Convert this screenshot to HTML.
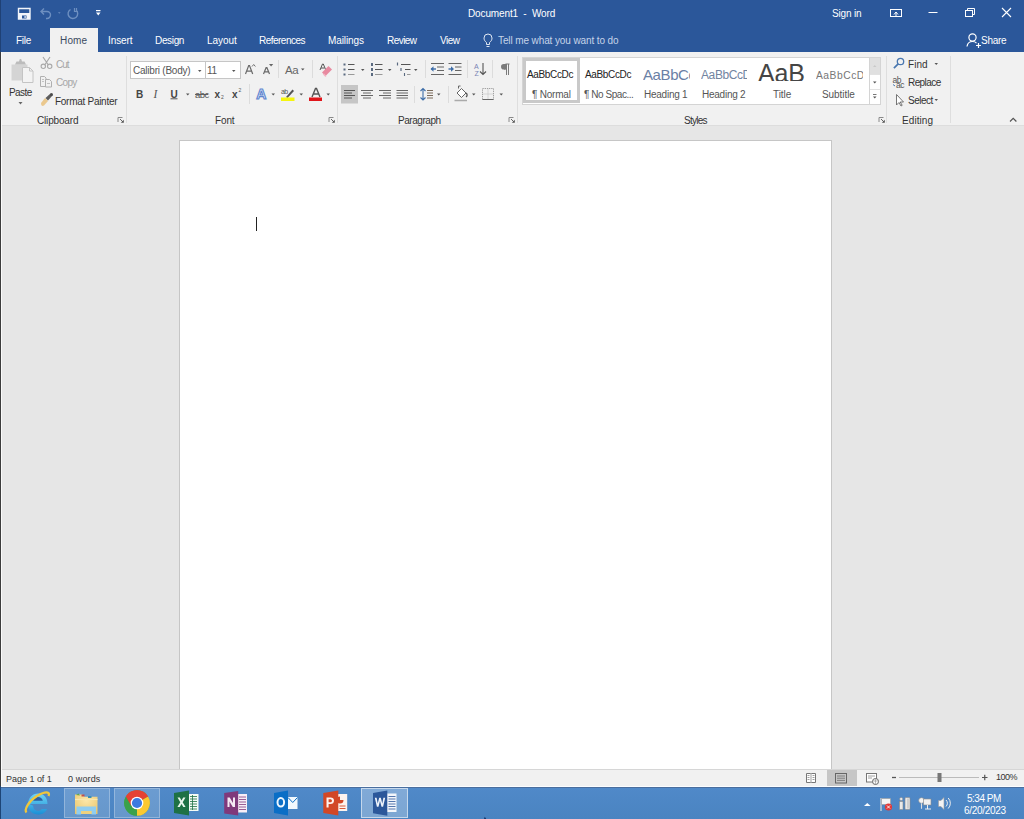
<!DOCTYPE html>
<html><head><meta charset="utf-8">
<style>
*{margin:0;padding:0;box-sizing:border-box}
html,body{width:1024px;height:819px;overflow:hidden;background:#e6e6e6;font-family:"Liberation Sans",sans-serif;}
.a{position:absolute;line-height:1;white-space:nowrap}
svg{position:absolute;overflow:visible}
#title{left:0;top:0;width:1024px;height:52px;background:#2b579a}
.tt{color:#fff;font-size:9.5px}
.tab{color:#fff;font-size:9.5px;top:36px}
#ribbon{left:0;top:52px;width:1024px;height:74px;background:#f1f1f1;border-bottom:1px solid #dddddd}
#page{left:179px;top:140px;width:653px;height:640px;background:#fff;border:1px solid #c6c6c6}
#status{left:0;top:769px;width:1024px;height:18px;background:#f1f1f1;border-top:1px solid #d6d6d6}
#taskbar{left:0;top:786px;width:1024px;height:33px;background:linear-gradient(#5089c9,#4a84c1);border-top:1px solid #fbfdff}
.st{font-size:9px;color:#444}
.rl{font-size:9.3px;color:#444}
.gl{font-size:9.3px;color:#444}
.sep{position:absolute;width:1px;background:#dedede}
.dis{color:#a6a6a6}
.arr{position:absolute;width:0;height:0;border-left:2px solid transparent;border-right:2px solid transparent;border-top:2px solid #555}
</style></head><body>
<!-- canvas & page -->
<div id="page" class="a"></div>
<div class="a" style="left:256px;top:217px;width:1px;height:14px;background:#222"></div>

<!-- title bar -->
<div id="title" class="a"></div>
<div class="a" style="left:468px;top:9px;font-size:10px;letter-spacing:-0.12px;color:#fff">Document1 &nbsp;- &nbsp;Word</div>
<div class="a" style="left:832px;top:9px;font-size:10px;letter-spacing:-0.17px;color:#fff">Sign in</div>
<div class="a" style="left:50px;top:28px;width:48px;height:24px;background:#f1f1f1"></div>
<div class="a" style="left:16px;top:36px;font-size:10px;letter-spacing:-0.27px;color:#fff">File</div>
<div class="a" style="left:60px;top:36px;font-size:10px;letter-spacing:0.17px;color:#3b4a5f">Home</div>
<div class="a" style="left:108px;top:36px;font-size:10px;letter-spacing:-0.08px;color:#fff">Insert</div>
<div class="a" style="left:155px;top:36px;font-size:10px;letter-spacing:-0.34px;color:#fff">Design</div>
<div class="a" style="left:207px;top:36px;font-size:10px;letter-spacing:-0.04px;color:#fff">Layout</div>
<div class="a" style="left:259px;top:36px;font-size:10px;letter-spacing:-0.52px;color:#fff">References</div>
<div class="a" style="left:328px;top:36px;font-size:10px;letter-spacing:-0.1px;color:#fff">Mailings</div>
<div class="a" style="left:387px;top:36px;font-size:10px;letter-spacing:-0.54px;color:#fff">Review</div>
<div class="a" style="left:440px;top:36px;font-size:10px;letter-spacing:-0.53px;color:#fff">View</div>
<div class="a" style="left:498px;top:36px;font-size:10px;letter-spacing:-0.11px;color:#c5d3e8">Tell me what you want to do</div>
<div class="a" style="left:981px;top:36px;font-size:10px;letter-spacing:-0.25px;color:#fff">Share</div>


<!-- QAT -->
<svg style="left:0px;top:0px" width="120" height="28">
 <path d="M18.5 8.5h11.5v10.5h-11.5z" fill="none" stroke="#f2f5fa" stroke-width="1.4"/>
 <rect x="18.5" y="13" width="11.5" height="6" fill="#f2f5fa"/>
 <rect x="22" y="15.5" width="4.5" height="3" fill="#2b579a"/>
 <rect x="24.5" y="16" width="1.2" height="2" fill="#f2f5fa"/>
 <path d="M44 8.5l-3 3 3 3M41.5 11.5h5.5a3.5 3.5 0 0 1 0 7h-1" fill="none" stroke="#6d8fc0" stroke-width="1.4"/>
 <path d="M58 12.3h2.6l-1.3 1.5z" fill="#6d8fc0"/>
 <path d="M70.5 9.5a4.8 4.8 0 1 0 5.5 .5" fill="none" stroke="#6d8fc0" stroke-width="1.4"/>
 <path d="M74.5 8v3.5h3.5M76.5 8v2" fill="none" stroke="#6d8fc0" stroke-width="1.2"/>
 <rect x="96" y="10" width="4.5" height="1.2" fill="#fff"/>
 <path d="M96 12.5h4.5l-2.25 3z" fill="#fff"/>
</svg>
<!-- window controls -->
<svg style="left:880px;top:0px" width="144" height="28">
 <rect x="10.5" y="9.5" width="11" height="7" fill="none" stroke="#fff" stroke-width="1"/>
 <path d="M14 14.5l2-2.5 2 2.5M16 12v4" fill="none" stroke="#fff" stroke-width="1"/>
 <rect x="48.5" y="12" width="9" height="1" fill="#fff"/>
 <rect x="85.5" y="10.5" width="7" height="6" fill="none" stroke="#fff" stroke-width="1"/>
 <path d="M87.5 10.5v-2h7v6h-2" fill="none" stroke="#fff" stroke-width="1"/>
 <path d="M122 8l9 9M131 8l-9 9" stroke="#fff" stroke-width="1.1"/>
</svg>
<!-- share -->
<svg style="left:960px;top:28px" width="24" height="24">
 <circle cx="12.5" cy="9.5" r="3.6" fill="none" stroke="#fff" stroke-width="1.2"/>
 <path d="M7 18.5c0.5-3.5 3-5 5.5-5s3.5 1 4 1.6" fill="none" stroke="#fff" stroke-width="1.2"/>
 <path d="M16 17.5h5M18.5 15v5" stroke="#fff" stroke-width="1.2"/>
</svg>
<!-- bulb -->
<svg style="left:480px;top:28px" width="16" height="24">
 <path d="M6.5 16.5v-2c-2-1.5-2.5-3-2.5-4.5a4 4 0 0 1 8 0c0 1.5-.5 3-2.5 4.5v2z" fill="none" stroke="#dfe7f3" stroke-width="1"/>
 <path d="M6.5 18.5h3" stroke="#dfe7f3" stroke-width="1"/>
</svg>

<!-- ribbon -->
<div id="ribbon" class="a"></div>
<div class="sep" style="left:126px;top:56px;height:67px"></div>
<div class="sep" style="left:337px;top:56px;height:67px"></div>
<div class="sep" style="left:517px;top:56px;height:67px"></div>
<div class="sep" style="left:886px;top:56px;height:67px"></div>
<div class="sep" style="left:950px;top:56px;height:67px"></div>


<!-- clipboard icons -->
<svg style="left:0px;top:52px" width="126" height="74">
 <path d="M11.5 12.5h16v16h-16z" fill="#d4d4d4"/>
 <path d="M15 12.5l1.5-3h2.5l0.8-2.5h1.4l0.8 2.5h2.5l1.5 3z" fill="#bcbcbc"/>
 <path d="M22.5 15.5h7l3.5 3.5v11.5h-10.5z" fill="#f3f3f3" stroke="#c4c4c4" stroke-width="1"/>
 <path d="M29.5 15.5v3.5h3.5" fill="none" stroke="#c4c4c4" stroke-width="1"/>
 <path d="M18.5 50h4l-2 2.5z" fill="#666"/>
 <path d="M43 5l6 9M50 5l-6 9" stroke="#a9a9a9" stroke-width="1.2"/>
 <circle cx="43.3" cy="14.3" r="2.2" fill="#f1f1f1" stroke="#a9a9a9" stroke-width="1.1"/>
 <circle cx="49.7" cy="14.3" r="2.2" fill="#f1f1f1" stroke="#a9a9a9" stroke-width="1.1"/>
 <path d="M40.5 24.5h4l1.5 1.5v8.5h-5.5z" fill="#f1f1f1" stroke="#b0b0b0" stroke-width="1"/>
 <path d="M45.5 27.5h4l2 2v5.5h-6z" fill="#f1f1f1" stroke="#b0b0b0" stroke-width="1"/>
 <path d="M42 27.5h2M42 29.5h2M47 31.5h3" stroke="#b8b8b8" stroke-width="0.8"/>
 <path d="M41 51l4-5 3 3-4 4.5c-1.5 1-3 .5-3-2.5z" fill="#eac88e"/>
 <path d="M45.5 46l5-4.5 2 2-4.5 5z" fill="#5c5c5c"/>
 <circle cx="51.5" cy="42.5" r="1.5" fill="#4a4a4a"/>
 
</svg>

<div class="a" style="left:9px;top:88px;font-size:10px;letter-spacing:-0.58px;color:#333">Paste</div>
<div class="a" style="left:56px;top:60px;font-size:10px;letter-spacing:-1.0px;color:#a6a6a6">Cut</div>
<div class="a" style="left:56px;top:78px;font-size:10px;letter-spacing:-0.67px;color:#a6a6a6">Copy</div>
<div class="a" style="left:55px;top:97px;font-size:10px;letter-spacing:-0.28px;color:#333">Format Painter</div>

<!-- font group -->
<div class="a" style="left:130px;top:61px;width:76px;height:18px;background:#fff;border:1px solid #c6c6c6"></div>
<div class="a" style="left:205px;top:61px;width:36px;height:18px;background:#fff;border:1px solid #c6c6c6"></div>
<div class="a" style="left:133px;top:66px;font-size:10px;letter-spacing:-0.23px;color:#555">Calibri (Body)</div>
<div class="a" style="left:207px;top:66px;font-size:10px;letter-spacing:-0.3px;color:#555">11</div>
<svg style="left:126px;top:52px" width="212" height="74">
 <path d="M72 18h3.5l-1.75 2z" fill="#555"/>
 <path d="M106 18h3.5l-1.75 2z" fill="#555"/>
 <!-- grow A -->
 <path d="M119.5 22l3.2-8.5h.8l3.2 8.5M121 19.2h4.2" fill="none" stroke="#6a6a6a" stroke-width="1.2"/>
 <path d="M126 14.5l1.7-2 1.7 2" fill="none" stroke="#666" stroke-width="0.9"/>
 <!-- shrink A -->
 <path d="M137.5 22l2.6-6.3h.8l2.6 6.3M138.8 19.8h3.8" fill="none" stroke="#6a6a6a" stroke-width="1.2"/>
 <path d="M143 12h4.2l-2.1 2.5z" fill="#666"/>
 <path d="M152.5 8v18" stroke="#dcdcdc"/>
 <!-- Aa -->
 <text x="159" y="21.5" font-family="Liberation Sans" font-size="11.5" fill="#666" letter-spacing="-0.4">Aa</text>
 <path d="M175 16.5h3.5l-1.75 2z" fill="#555"/>
 <path d="M186.5 8v18" stroke="#dcdcdc"/>
 <!-- clear formatting -->
 <path d="M194 18l2.5-6h.8l2.5 6M195 16h3.5" fill="none" stroke="#555" stroke-width="1"/>
 <path d="M196 20.5l6.5-6.5 3.5 3.5-6.5 6.5z" fill="#e88aa0"/>
 <path d="M197.5 22l2.5 2.5" stroke="#f2b6c4" stroke-width="1.5"/>
 
 <!-- row2 -->
 <text x="10" y="45.6" font-family="Liberation Sans" font-weight="bold" font-size="10" fill="#444">B</text>
 <text x="27.5" y="45.6" font-family="Liberation Serif" font-style="italic" font-size="11.5" fill="#555">I</text>
 <text x="44.5" y="45.6" font-family="Liberation Sans" font-weight="bold" font-size="10" fill="#444">U</text>
 <path d="M44.5 46.8h7" stroke="#444" stroke-width="0.9"/>
 <path d="M60 41.6h3.5l-1.75 2z" fill="#555"/>
 <text x="69" y="45.6" font-family="Liberation Sans" font-size="9.5" fill="#555" letter-spacing="-0.5">abc</text>
 <path d="M69 42.5h13" stroke="#555" stroke-width="0.9"/>
 <text x="88.5" y="45.6" font-family="Liberation Sans" font-weight="bold" font-size="10" fill="#444">x</text>
 <text x="95" y="47" font-family="Liberation Sans" font-size="5" fill="#555">2</text>
 <text x="106" y="45.6" font-family="Liberation Sans" font-weight="bold" font-size="10" fill="#444">x</text>
 <text x="112.5" y="40" font-family="Liberation Sans" font-size="5" fill="#555">2</text>
 <path d="M123.5 32v20" stroke="#dcdcdc"/>
 <!-- text effects -->
 <text x="130.2" y="47" font-family="Liberation Sans" font-weight="bold" font-size="14" fill="#e9effa" stroke="#5f86cf" stroke-width="1.1">A</text>
 <path d="M145.5 41.6h3.5l-1.75 2z" fill="#555"/>
 <!-- highlight -->
 <text x="155" y="42" font-family="Liberation Sans" font-size="7" fill="#555" letter-spacing="-0.6">ab</text>
 <path d="M160 45l6.5-7.5 1.5 1.5-6.5 7z" fill="#555"/>
 <rect x="155" y="45.5" width="13.5" height="3.5" fill="#f5f50f"/>
 <path d="M173.5 41.6h3.5l-1.75 2z" fill="#555"/>
 <!-- font color -->
 <path d="M186 45l3.5-8.5h1l3.5 8.5M187.5 42h5" fill="none" stroke="#555" stroke-width="1.4"/>
 <rect x="183" y="45.5" width="13" height="3.5" fill="#e0151b"/>
 <path d="M200.5 41.6h3.5l-1.75 2z" fill="#555"/>
</svg>


<!-- paragraph group -->
<svg style="left:337px;top:52px" width="180" height="74">
 <!-- bullets -->
 <g fill="#5a6a80"><rect x="6.5" y="11.5" width="2" height="2"/><rect x="6.5" y="16.5" width="2" height="2"/><rect x="6.5" y="21.5" width="2" height="2"/></g>
 <path d="M11 12.5h6.5M11 17.5h6.5" stroke="#555" stroke-width="1"/>
 <path d="M11 22.5h6.5" stroke="#999" stroke-width="1"/>
 <path d="M24 17h3.5l-1.75 2z" fill="#555"/>
 <!-- numbering -->
 <g fill="#5a6a80"><rect x="34" y="11" width="2" height="3"/><rect x="34" y="16" width="2" height="3"/><rect x="34" y="21" width="2" height="3"/></g>
 <path d="M38 12.5h7.5M38 17.5h7.5" stroke="#555" stroke-width="1"/>
 <path d="M38 22.5h7.5" stroke="#999" stroke-width="1"/>
 <path d="M51 17h3.5l-1.75 2z" fill="#555"/>
 <!-- multilevel -->
 <path d="M60.5 10.5v3" stroke="#5a6a80" stroke-width="1.2"/>
 <path d="M64 12.5h9.5" stroke="#555" stroke-width="1"/>
 <path d="M64 16v3" stroke="#5a6a80" stroke-width="1.2"/>
 <path d="M68 17.5h5.5" stroke="#555" stroke-width="1"/>
 <path d="M67.5 21v3" stroke="#5a6a80" stroke-width="1.1"/>
 <path d="M70 22.5h3.5" stroke="#999" stroke-width="1"/>
 <path d="M77 17h3.5l-1.75 2z" fill="#555"/>
 <path d="M88.5 8v18" stroke="#dcdcdc"/>
 <!-- decrease indent -->
 <path d="M94 11.5h13M100 15h7M100 18.5h7M94 22.5h13" stroke="#666" stroke-width="1"/>
 <path d="M94 17h5" stroke="#3f6ea8" stroke-width="1.4"/><path d="M93.5 17l3-2.8v5.6z" fill="#3f6ea8"/>
 <!-- increase indent -->
 <path d="M111.5 11.5h13M118 15h6.5M118 18.5h6.5M111.5 22.5h13" stroke="#666" stroke-width="1"/>
 <path d="M111.5 17h4.5" stroke="#3f6ea8" stroke-width="1.4"/><path d="M117 17l-3-2.8v5.6z" fill="#3f6ea8"/>
 <path d="M130.5 8v18" stroke="#dcdcdc"/>
 <!-- sort -->
 <text x="137" y="17" font-family="Liberation Sans" font-size="7" fill="#7a85b5">A</text>
 <text x="137.5" y="23.5" font-family="Liberation Sans" font-size="7" fill="#7a85b5">Z</text>
 <path d="M146 11v11.5M143 19.5l3 3 3-3" fill="none" stroke="#555" stroke-width="1.1"/>
 <path d="M155.5 8v18" stroke="#dcdcdc"/>
 <!-- pilcrow -->
 <path d="M168.5 12h4M169.5 12v11M171.5 12v11" stroke="#7a7a7a" stroke-width="1"/>
 <circle cx="166.8" cy="14.8" r="2.8" fill="#7a7a7a"/>
 <path d="M167 12h3v5.6h-3z" fill="#7a7a7a"/>
 <!-- row 2 -->
 <rect x="4" y="33" width="17" height="18.5" fill="#c6c6c6"/>
 <path d="M7 38.5h11M7 41h8M7 43.5h11M7 46h8" stroke="#555" stroke-width="1"/>
 <path d="M24 38.5h12M26 41h8M24 43.5h12M26 46h8" stroke="#666" stroke-width="1"/>
 <path d="M42 38.5h12M46 41h8M42 43.5h12M46 46h8" stroke="#666" stroke-width="1"/>
 <path d="M59.5 38.5h11.5M59.5 41h11.5M59.5 43.5h11.5M59.5 46h11.5" stroke="#666" stroke-width="1"/>
 <path d="M77.5 34v17" stroke="#dcdcdc"/>
 <!-- line spacing -->
 <path d="M86 36.5v11.5M83.5 39l2.5-2.5 2.5 2.5M83.5 45.5l2.5 2.5 2.5-2.5" fill="none" stroke="#3f6ea8" stroke-width="1.1"/>
 <path d="M90 38.5h6M90 41h6M90 43.5h6M90 46h6" stroke="#7a6a5a" stroke-width="1"/>
 <path d="M100 41.6h3.5l-1.75 2z" fill="#555"/>
 <path d="M111.5 34v17" stroke="#dcdcdc"/>
 <!-- shading -->
 <path d="M120 41l4.5-4.5 4.5 4.5-4.5 4.5z" fill="#fff" stroke="#666" stroke-width="1"/>
 <path d="M121.5 36.5v-2.5h2" fill="none" stroke="#666" stroke-width="1"/>
 <path d="M129 41c1.5 1 1.5 3 0 4" fill="none" stroke="#555" stroke-width="1.3"/>
 <path d="M117.5 48.5h12.5" stroke="#aaa" stroke-width="1.5"/>
 <path d="M135 41.6h3.5l-1.75 2z" fill="#555"/>
 <!-- borders -->
 <rect x="145.5" y="36.5" width="11" height="11" fill="none" stroke="#999" stroke-width="1" stroke-dasharray="1.2 1"/>
 <path d="M151 36.5v11M145.5 42h11" stroke="#bbb" stroke-width="1" stroke-dasharray="1 1"/>
 <path d="M145.5 47.5h11" stroke="#666" stroke-width="1"/>
 <path d="M162.5 41.6h3.5l-1.75 2z" fill="#555"/>
 
</svg>


<!-- styles gallery -->
<div class="a" style="left:522px;top:57px;width:359px;height:48px;background:#fff;border:1px solid #d4d4d4"></div>
<div class="a" style="left:523px;top:58px;width:57px;height:45px;border:3px solid #c9c9c9"></div>
<div class="a" style="left:527px;top:70px;font-size:10px;color:#222;letter-spacing:-0.35px">AaBbCcDc</div>
<div class="a" style="left:532px;top:90px;font-size:10px;letter-spacing:-0.21px;color:#555">&para; Normal</div>
<div class="a" style="left:585px;top:70px;font-size:10px;color:#222;letter-spacing:-0.35px">AaBbCcDc</div>
<div class="a" style="left:584px;top:90px;font-size:10px;letter-spacing:-0.45px;color:#555">&para; No Spac...</div>
<div class="a" style="left:643px;top:67px;font-size:15px;color:#6a7fa5;letter-spacing:-0.4px;width:47px;overflow:hidden">AaBbCc</div>
<div class="a" style="left:644px;top:90px;font-size:10px;letter-spacing:-0.25px;color:#555">Heading 1</div>
<div class="a" style="left:701px;top:68.5px;font-size:12px;color:#72849f;letter-spacing:-0.4px;width:46px;overflow:hidden">AaBbCcD</div>
<div class="a" style="left:702px;top:90px;font-size:10px;letter-spacing:-0.25px;color:#555">Heading 2</div>
<div class="a" style="left:757px;top:58px;width:48px;height:23px;overflow:hidden"><div class="a" style="left:1px;top:3px;font-size:25px;color:#454545;letter-spacing:-0.2px;line-height:1">AaB</div></div>
<div class="a" style="left:773px;top:90px;font-size:10px;letter-spacing:-0.07px;color:#555">Title</div>
<div class="a" style="left:816px;top:71px;font-size:10.3px;color:#777;letter-spacing:0.5px;width:47px;overflow:hidden">AaBbCcD</div>
<div class="a" style="left:822px;top:90px;font-size:10px;letter-spacing:-0.07px;color:#555">Subtitle</div>
<div class="a" style="left:869px;top:57px;width:12px;height:48px;background:#fff;border:1px solid #d4d4d4"></div>
<div class="a" style="left:870px;top:58px;width:10px;height:16px;background:#e0e0e0"></div>
<div class="a" style="left:870px;top:74px;width:10px;height:1px;background:#e2e2e2"></div>
<div class="a" style="left:870px;top:89px;width:10px;height:1px;background:#e2e2e2"></div>
<svg style="left:869px;top:57px" width="12" height="48">
 <path d="M4 10h3.5l-1.75-2z" fill="#c9c9c9"/>
 <path d="M4 24.5h3.5l-1.75 2z" fill="#555"/>
 <path d="M4 37.5h3.5" stroke="#555" stroke-width="0.8"/>
 <path d="M4 39.5h3.5l-1.75 2z" fill="#555"/>
</svg>

<!-- editing -->
<svg style="left:886px;top:52px" width="64" height="74">
 <circle cx="14.5" cy="9.5" r="3.2" fill="none" stroke="#4a78b0" stroke-width="1.3"/>
 <path d="M12.2 11.8l-4.3 4.3" stroke="#4a78b0" stroke-width="1.7"/>
 <text x="6.5" y="31" font-family="Liberation Sans" font-size="8.5" fill="#555" letter-spacing="-0.5">ab</text>
 <text x="10" y="35.5" font-family="Liberation Sans" font-size="8.5" fill="#555" letter-spacing="-0.5">ac</text>
 <path d="M7 32.5l2 1.5" stroke="#4a78b0" stroke-width="1"/>
 <path d="M10.5 42.5v10.5l2.5-2.5 2 3.5 1.2-.7-2-3.3h3.3z" fill="#fff" stroke="#666" stroke-width="0.9"/>
 <path d="M48.5 11h3.5l-1.75 2z" fill="#555"/>
 <path d="M48.5 47h3.5l-1.75 2z" fill="#555"/>
</svg>
<svg style="left:1004px;top:112px" width="16" height="14"><path d="M6 9.5l3.2-3.2 3.2 3.2" fill="none" stroke="#555" stroke-width="1.2"/></svg>

<div class="a" style="left:37px;top:116px;font-size:10px;letter-spacing:-0.17px;color:#333">Clipboard</div>
<div class="a" style="left:215px;top:116px;font-size:10px;letter-spacing:-0.13px;color:#333">Font</div>
<div class="a" style="left:398px;top:116px;font-size:10px;letter-spacing:-0.44px;color:#333">Paragraph</div>
<div class="a" style="left:684px;top:116px;font-size:10px;letter-spacing:-0.76px;color:#333">Styles</div>
<div class="a" style="left:902px;top:116px;font-size:10px;letter-spacing:0.08px;color:#333">Editing</div>

<div class="a" style="left:908px;top:60px;font-size:10px;letter-spacing:0.07px;color:#333">Find</div>
<div class="a" style="left:908px;top:78px;font-size:10px;letter-spacing:-0.58px;color:#333">Replace</div>
<div class="a" style="left:908px;top:96px;font-size:10px;letter-spacing:-0.5px;color:#333">Select</div>

<svg style="left:117px;top:116px" width="8" height="8"><path d="M1 6V1.5h4.5" fill="none" stroke="#8a8a8a" stroke-width="1"/><path d="M3 3l3 3" stroke="#666" stroke-width="1"/><path d="M6.8 6.8v-3l-3 3z" fill="#555"/></svg>
<svg style="left:328px;top:116px" width="8" height="8"><path d="M1 6V1.5h4.5" fill="none" stroke="#8a8a8a" stroke-width="1"/><path d="M3 3l3 3" stroke="#666" stroke-width="1"/><path d="M6.8 6.8v-3l-3 3z" fill="#555"/></svg>
<svg style="left:507.5px;top:116px" width="8" height="8"><path d="M1 6V1.5h4.5" fill="none" stroke="#8a8a8a" stroke-width="1"/><path d="M3 3l3 3" stroke="#666" stroke-width="1"/><path d="M6.8 6.8v-3l-3 3z" fill="#555"/></svg>
<svg style="left:877.5px;top:116px" width="8" height="8"><path d="M1 6V1.5h4.5" fill="none" stroke="#8a8a8a" stroke-width="1"/><path d="M3 3l3 3" stroke="#666" stroke-width="1"/><path d="M6.8 6.8v-3l-3 3z" fill="#555"/></svg>
<!-- status -->
<div id="status" class="a"></div>
<div class="a" style="left:6px;top:775px;font-size:9px;letter-spacing:-0.02px;color:#333">Page 1 of 1</div>
<div class="a" style="left:68px;top:775px;font-size:9px;letter-spacing:0.13px;color:#333">0 words</div>

<!-- status icons -->
<div class="a" style="left:827px;top:770px;width:30px;height:17px;background:#c6c6c6"></div>
<svg style="left:800px;top:769px" width="224" height="18">
 <path d="M6.5 4.5h4l.5 .5.5-.5h4v9h-4l-.5.5-.5-.5h-4z" fill="#fff" stroke="#777" stroke-width="1"/>
 <path d="M11 5v8.5M7.5 6.5h2M7.5 8.5h2M7.5 10.5h2M12.5 6.5h2M12.5 8.5h2M12.5 10.5h2" stroke="#888" stroke-width="0.8"/>
 <rect x="35.5" y="4.5" width="11" height="9.5" fill="none" stroke="#666" stroke-width="1"/>
 <path d="M37 7h8M37 9.2h8M37 11.4h8" stroke="#777" stroke-width="0.9"/>
 <rect x="66.5" y="4.5" width="10" height="8.5" fill="#fff" stroke="#777" stroke-width="1"/>
 <path d="M68 7h7M68 9h4" stroke="#888" stroke-width="0.8"/>
 <circle cx="75.5" cy="12.5" r="3" fill="#fff" stroke="#666" stroke-width="1"/>
 <path d="M73 12h5M75.5 10v5" stroke="#888" stroke-width="0.6"/>
 <path d="M92 8.5h4" stroke="#555" stroke-width="1.3"/>
 <path d="M99 8.5h80" stroke="#bbb" stroke-width="1"/>
 <rect x="137.5" y="4" width="4" height="9" fill="#777"/>
 <path d="M182 8.5h5.5M184.75 5.75v5.5" stroke="#555" stroke-width="1.2"/>
</svg>

<div class="a" style="left:996px;top:773px;font-size:9px;letter-spacing:-0.47px;color:#333">100%</div>

<!-- taskbar -->
<div id="taskbar" class="a"></div>
<div class="a" style="left:0;top:787px;width:1024px;height:1px;background:#4a6e9e"></div>

<!-- taskbar buttons -->
<div class="a" style="left:64px;top:788px;width:46px;height:30px;background:rgba(255,255,255,0.16);border:1px solid rgba(255,255,255,0.28)"></div>
<div class="a" style="left:114px;top:788px;width:46px;height:30px;background:rgba(255,255,255,0.16);border:1px solid rgba(255,255,255,0.28)"></div>
<div class="a" style="left:361px;top:788px;width:47px;height:30px;background:rgba(255,255,255,0.28);border:1px solid rgba(255,255,255,0.55)"></div>
<svg style="left:0px;top:787px" width="420" height="32">
 <defs>
  <linearGradient id="ieg" x1="0" y1="0" x2="0" y2="1"><stop offset="0" stop-color="#6fd4f5"/><stop offset="1" stop-color="#1a8fd6"/></linearGradient>
  <radialGradient id="fold" cx="0.5" cy="0.3" r="0.8"><stop offset="0" stop-color="#fbe7a8"/><stop offset="1" stop-color="#e9c46a"/></radialGradient>
 </defs>
 <!-- IE -->
 <path d="M29.5 17h18c0-6.5-4-10.5-9.5-10.5S28 11 28 17.2s4.5 10.3 10.3 10.3c4.2 0 7.3-2.2 8.8-5.5h-5.3c-.9 1.2-2.1 1.9-3.6 1.9-3 0-5-2.3-5-5.2z" fill="url(#ieg)"/>
 <path d="M33.2 13.8c.5-2.4 2.4-3.9 4.8-3.9s4.3 1.5 4.8 3.9z" fill="#2f5f9e"/>
 <path d="M26.5 25.5c-2.5-2.5 2-11.5 10.5-16.5s13.5-4.5 11.5 0" fill="none" stroke="#f0c63a" stroke-width="2.3"/>
 <!-- Explorer -->
 <path d="M75 7.5h7.5l2 2.2h13v17.3h-22.5z" fill="url(#fold)"/>
 <path d="M76 8l2.5 -1.5 1.5 2z" fill="#5fa84a"/>
 <rect x="81.5" y="7.5" width="3" height="2" fill="#c0504d"/>
 <rect x="88" y="9" width="3.5" height="2" fill="#3a8fb7"/>
 <path d="M75 12.5h22.5" stroke="#f8e7b0" stroke-width="1.2"/>
 <path d="M76.5 19.5h19.5v8h-4.5v-3.5h-10.5v3.5h-4.5z" fill="#8fcdf0"/>
 <path d="M81 24h10.5v3h-10.5z" fill="#efd27e"/>
 <!-- Chrome -->
 <circle cx="137" cy="16" r="12.8" fill="#4aa74f"/>
 <path d="M137 16L125.9 9.6A12.8 12.8 0 0 1 148.1 9.6z" fill="#e54234"/>
 <path d="M137 16L148.1 9.6A12.8 12.8 0 0 1 137 28.8z" fill="#fbc830"/>
 <path d="M137 16L137 28.8A12.8 12.8 0 0 1 125.9 9.6z" fill="#3aa14b"/>
 <path d="M137 9.8h11A12.8 12.8 0 0 0 125.9 9.6l5.5 9.6z" fill="#e54234"/>
 <circle cx="137" cy="16" r="6.3" fill="#fff"/>
 <circle cx="137" cy="16" r="5.1" fill="#3c7ae0"/>
 <!-- Excel -->
 <path d="M188 7h10.5v17h-10.5z" fill="#f4fbf6"/>
 <path d="M190 9.5h7M190 12h7M190 14.5h7M190 17h7M190 19.5h7M190 22h7M192.5 8v15" stroke="#207245" stroke-width="0.8"/>
 <path d="M174 6l15-2.5v25l-15-2.5z" fill="#1e7145"/>
 <path d="M177.5 10.5h2.3l1.7 3 1.7-3h2.3l-2.8 4.7 2.9 4.8h-2.3l-1.8-3.1-1.8 3.1h-2.3l2.9-4.8z" fill="#e8f5ec"/>
 <!-- OneNote -->
 <path d="M237.5 7h9.5v18.5h-9.5z" fill="#f7eef7"/>
 <path d="M239 10h7M239 12.5h7M239 15h7M239 17.5h7M239 20h7M239 22.5h7" stroke="#80397b" stroke-width="0.8"/>
 <path d="M224.2 6l14-2v24.5l-14-2z" fill="#80397b"/>
 <path d="M227.5 10.5h2.2l3.3 5.5v-5.5h2v9.5h-2.2l-3.3-5.5v5.5h-2z" fill="#f5e9f4"/>
 <!-- Outlook -->
 <path d="M288 10h9.5v12h-9.5z" fill="#f2f8fd"/>
 <path d="M288 10.5l4.75 5 4.75-5" fill="none" stroke="#0a6ec6" stroke-width="1"/>
 <path d="M274 6l14-2.5v25l-14-2.5z" fill="#0a6ec6"/>
 <ellipse cx="280.8" cy="15.3" rx="3.3" ry="4.3" fill="none" stroke="#eef6fd" stroke-width="2"/>
 <!-- PowerPoint -->
 <path d="M337.5 7h9.7v17h-9.7z" fill="#fdf2ee"/>
 <path d="M340 9.5a3.5 3.5 0 1 0 3.5 3.5h-3.5z" fill="#d24726"/>
 <path d="M339.5 19h6M339.5 21.5h6" stroke="#d24726" stroke-width="0.9"/>
 <path d="M323.3 6l15-2.5v25l-15-2.5z" fill="#d24726"/>
 <path d="M326.5 10.5h4c2.2 0 3.5 1.2 3.5 3.2s-1.3 3.3-3.5 3.3h-1.9v3.5h-2.1zM328.6 12.3v3h1.7c1 0 1.6-.5 1.6-1.5s-.6-1.5-1.6-1.5z" fill="#fdf2ee"/>
 <!-- Word -->
 <path d="M386.8 6.5h9.7v18.5h-9.7z" fill="#f3f6fb"/>
 <path d="M388.5 9.5h7M388.5 12h7M388.5 14.5h7M388.5 17h7M388.5 19.5h7M388.5 22h7" stroke="#2b579a" stroke-width="0.8"/>
 <path d="M373 6l14.3-2.5v25.3l-14.3-2.5z" fill="#2b579a"/>
 <path d="M374.8 10.8h1.8l1.1 5.6 1.5-5.6h1.6l1.5 5.6 1.1-5.6h1.8l-2.1 8.9h-1.6l-1.5-5.6-1.5 5.6h-1.6z" fill="#eef3fa"/>
</svg>
<!-- tray -->
<svg style="left:850px;top:787px" width="110" height="32">
 <path d="M14 19l3.3-3 3.3 3z" fill="#fff"/>
 <path d="M31 11v13" stroke="#ddd" stroke-width="1.2"/>
 <path d="M31.5 11.5h9v6h-9z" fill="#f4f4f4" stroke="#999" stroke-width="0.6"/>
 <circle cx="38.5" cy="20" r="3.6" fill="#e03a3a"/>
 <path d="M37 18.5l3 3M40 18.5l-3 3" stroke="#fff" stroke-width="0.9"/>
 <rect x="49.5" y="14.5" width="3.5" height="8" fill="#e9e9e9" stroke="#8a8a8a" stroke-width="0.6"/>
 <circle cx="51.2" cy="12" r="1.6" fill="#e9e9e9" stroke="#8a8a8a" stroke-width="0.5"/>
 <rect x="55" y="10.5" width="5" height="12" rx="1" fill="#e9e9e9" stroke="#8a8a8a" stroke-width="0.6"/>
 <rect x="57" y="11.5" width="2" height="10" fill="#cfcfcf"/>
 <circle cx="71.5" cy="13.5" r="2.8" fill="#f3f3f3" stroke="#8a8a8a" stroke-width="0.6"/>
 <path d="M71.5 16.3v5.5" stroke="#ddd" stroke-width="1.1"/>
 <rect x="73.5" y="12" width="7.5" height="6" fill="#f1f1f1" stroke="#8a8a8a" stroke-width="0.6"/>
 <path d="M75 22h6M77.5 18v4" stroke="#eee" stroke-width="1"/>
 <path d="M88.5 13.5h2.5l3-3v12l-3-3h-2.5z" fill="#f3f3f3" stroke="#9a9a9a" stroke-width="0.6"/>
 <path d="M96 13a4.5 4.5 0 0 1 0 6.5M98.2 11a7.5 7.5 0 0 1 0 10.5" fill="none" stroke="#eee" stroke-width="1"/>
</svg>

<div class="a" style="left:967px;top:794px;font-size:10px;letter-spacing:-0.5px;color:#fff">5:34 PM</div>
<div class="a" style="left:964px;top:806px;font-size:10px;letter-spacing:-0.29px;color:#fff">6/20/2023</div>
<div class="a" style="left:0;top:0;width:1px;height:52px;background:#1f4175"></div>
<div class="a" style="left:0;top:52px;width:1px;height:734px;background:#3c3c3c"></div>
<div class="a" style="left:1px;top:52px;width:1px;height:734px;background:#fafafa"></div>
<div class="a" style="left:0;top:786px;width:1px;height:33px;background:#1d4576"></div>
<svg style="left:482px;top:815px" width="6" height="4"><path d="M2 4l.8-2.2 1.4 2.2z" fill="#0f2f66"/></svg>
</body></html>
